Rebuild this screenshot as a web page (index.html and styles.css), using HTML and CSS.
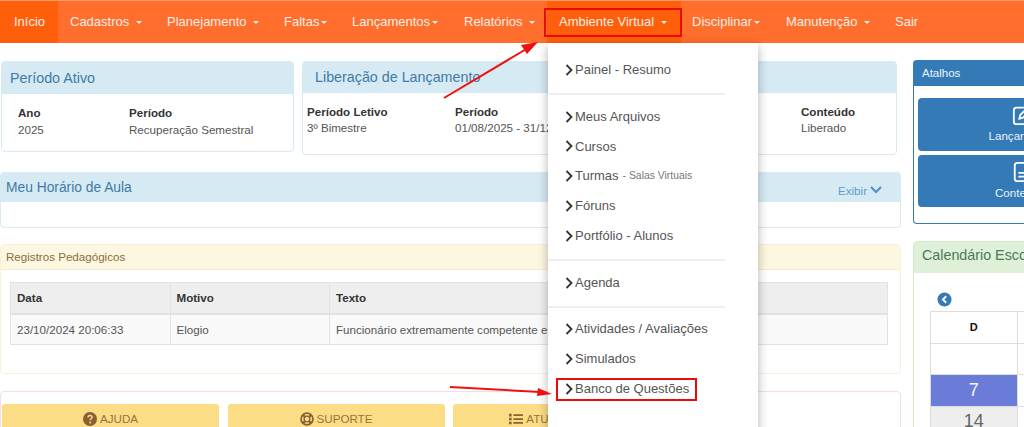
FILE: index.html
```html
<!DOCTYPE html>
<html lang="pt-BR">
<head>
<meta charset="utf-8">
<title>Ambiente Virtual</title>
<link rel="stylesheet" href="styles.css">
</head>
<body>
<nav class="navbar">
  <a class="nav-item active nav-inicio">Início</a>
  <a class="nav-item nav-cad">Cadastros <i class="caret"></i></a>
  <a class="nav-item nav-plan">Planejamento <i class="caret"></i></a>
  <a class="nav-item nav-fal">Faltas<i class="caret tight"></i></a>
  <a class="nav-item nav-lan">Lançamentos<i class="caret tight"></i></a>
  <a class="nav-item nav-rel">Relatórios <i class="caret"></i></a>
  <div class="nav-open">
    <a class="nav-item active nav-amb">Ambiente Virtual <i class="caret"></i></a>
    <span class="mark mark-nav"></span>
    <ul class="dropdown">
      <li class="menu-item first"><svg class="chev" viewBox="0 0 8 12"><path d="M1.5 1l5 5-5 5"/></svg>Painel - Resumo</li>
      <li class="divider"></li>
      <li class="menu-item"><svg class="chev" viewBox="0 0 8 12"><path d="M1.5 1l5 5-5 5"/></svg>Meus Arquivos</li>
      <li class="menu-item"><svg class="chev" viewBox="0 0 8 12"><path d="M1.5 1l5 5-5 5"/></svg>Cursos</li>
      <li class="menu-item"><svg class="chev" viewBox="0 0 8 12"><path d="M1.5 1l5 5-5 5"/></svg>Turmas <small>- Salas Virtuais</small></li>
      <li class="menu-item"><svg class="chev" viewBox="0 0 8 12"><path d="M1.5 1l5 5-5 5"/></svg>Fóruns</li>
      <li class="menu-item"><svg class="chev" viewBox="0 0 8 12"><path d="M1.5 1l5 5-5 5"/></svg>Portfólio - Alunos</li>
      <li class="divider"></li>
      <li class="menu-item"><svg class="chev" viewBox="0 0 8 12"><path d="M1.5 1l5 5-5 5"/></svg>Agenda</li>
      <li class="divider"></li>
      <li class="menu-item"><svg class="chev" viewBox="0 0 8 12"><path d="M1.5 1l5 5-5 5"/></svg>Atividades / Avaliações</li>
      <li class="menu-item"><svg class="chev" viewBox="0 0 8 12"><path d="M1.5 1l5 5-5 5"/></svg>Simulados</li>
      <li class="menu-item marked"><svg class="chev" viewBox="0 0 8 12"><path d="M1.5 1l5 5-5 5"/></svg>Banco de Questões</li>
    </ul>
  </div>
  <a class="nav-item nav-dis">Disciplinar<i class="caret tight"></i></a>
  <a class="nav-item nav-man">Manutenção <i class="caret"></i></a>
  <a class="nav-item nav-sair">Sair</a>
</nav>

<main class="page">
  <div class="col-left">
    <div class="row-top">
      <section class="panel panel-info panel-ativo">
        <h3 class="panel-head">Período Ativo</h3>
        <div class="info-cols ativo-cols">
          <div class="info"><b>Ano</b><span>2025</span></div>
          <div class="info"><b>Período</b><span>Recuperação Semestral</span></div>
        </div>
      </section>
      <section class="panel panel-info panel-lib">
        <h3 class="panel-head">Liberação de Lançamento</h3>
        <div class="info-cols lib-cols">
          <div class="info"><b>Período Letivo</b><span>3º Bimestre</span></div>
          <div class="info"><b>Período</b><span>01/08/2025 - 31/12/2025</span></div>
          <div class="info"><b>Conteúdo</b><span>Liberado</span></div>
        </div>
      </section>
    </div>

    <section class="panel panel-info panel-horario">
      <div class="panel-head horario-head">
        <h3>Meu Horário de Aula</h3>
        <a class="exibir">Exibir <svg class="chev-down" viewBox="0 0 12 8"><path d="M1 1l5 5 5-5"/></svg></a>
      </div>
    </section>

    <section class="panel panel-warn">
      <div class="warn-head">Registros Pedagógicos</div>
      <table class="grid">
        <thead><tr><th class="c1">Data</th><th class="c2">Motivo</th><th>Texto</th></tr></thead>
        <tbody><tr><td>23/10/2024 20:06:33</td><td>Elogio</td><td>Funcionário extremamente competente e</td></tr></tbody>
      </table>
    </section>

    <section class="panel panel-danger">
      <div class="btn-row">
        <a class="btn-y">
          <svg class="ico" viewBox="0 0 16 16"><circle cx="8" cy="8" r="8" fill="#8a6034"/><path d="M5.8 6.2c0-3 4.6-3 4.6-.2 0 1.800-2.200 1.700-2.200 3.500" fill="none" stroke="#fbdd85" stroke-width="1.700"/><circle cx="8.200" cy="12" r="1.100" fill="#fbdd85"/></svg>
          AJUDA</a>
        <a class="btn-y">
          <svg class="ico" viewBox="0 0 16 16"><g fill="none" stroke="#8a6034"><circle cx="8" cy="8" r="6.800" stroke-width="2"/><circle cx="8" cy="8" r="3.300" stroke-width="1.500"/><path d="M3.500 3.500l2.500 2.500M12.500 3.500l-2.500 2.500M3.500 12.500l2.500-2.500M12.500 12.500l-2.500-2.500" stroke-width="2.500"/></g></svg>
          SUPORTE</a>
        <a class="btn-y">
          <svg class="ico" viewBox="0 0 16 16"><path d="M5 3.500h11M5 8h11M5 12.500h11" stroke="#8a6034" stroke-width="2"/><path d="M0 2h3v3H0zM0 6.500h3v3H0zM0 11h3v3H0z" fill="#8a6034"/></svg>
          ATUALIZAÇÕES</a>
      </div>
    </section>
  </div>

  <div class="col-right">
    <section class="panel atalhos">
      <div class="atalhos-head">Atalhos</div>
      <div class="atalhos-body">
        <a class="btn-b">
          <svg class="ico-b" viewBox="0 0 24 24"><path d="M20 13v6a3 3 0 0 1-3 3H5a3 3 0 0 1-3-3V7a3 3 0 0 1 3-3h8" fill="none" stroke="#fff" stroke-width="2"/><path d="M8 16l1-4L19 2l3 3-10 10z" fill="none" stroke="#fff" stroke-width="2"/></svg>
          <span>Lançar Notas</span></a>
        <a class="btn-b">
          <svg class="ico-b" viewBox="0 0 24 24"><path d="M6 2h9l6 6v11a3 3 0 0 1-3 3H6a3 3 0 0 1-3-3V5a3 3 0 0 1 3-3z" fill="none" stroke="#fff" stroke-width="2"/><path d="M7 13h10M7 17h10" stroke="#fff" stroke-width="2"/></svg>
          <span>Conteúdos</span></a>
      </div>
    </section>
    <section class="panel cal">
      <h3 class="cal-head">Calendário Escolar</h3>
      <div class="cal-body">
        <svg class="cal-prev" viewBox="0 0 16 16"><circle cx="8" cy="8" r="7.500" fill="#337ab7"/><path d="M9.800 4.500L6.300 8l3.500 3.500" fill="none" stroke="#fff" stroke-width="2"/></svg>
        <table class="cal-table">
          <tr><th>D</th><th></th></tr>
          <tr><td></td><td></td></tr>
          <tr><td class="today">7</td><td></td></tr>
          <tr><td class="grey">14</td><td></td></tr>
        </table>
      </div>
    </section>
  </div>
</main>

<svg class="arrows" viewBox="0 0 1024 427">
  <path d="M444 98L528 48" stroke="#f01010" stroke-width="2" fill="none"/>
  <path d="M538 42l-17 3 6 9z" fill="#f01010"/>
  <path d="M450 387L540 392" stroke="#f01010" stroke-width="2" fill="none"/>
  <path d="M552 394l-14-6 -1 8z" fill="#f01010"/>
</svg>
</body>
</html>
```

FILE: styles.css
```css
* { box-sizing: border-box; }
html, body { margin: 0; height: 427px; overflow: hidden; background: #fff; }
body { position: relative; font: 11.6px/17px "Liberation Sans", Arial, sans-serif; color: #333; }
h3 { margin: 0; font-weight: normal; font-size: inherit; }
a { display: block; }

.navbar { display: flex; height: 42px; margin-top: 1px; background: #ff6e2c; color: #fff; font-size: 13px; line-height: 42px; box-shadow: 0 -1px 0 #ff9a6a; }
.nav-item { padding: 0 12px; white-space: nowrap; color: #fdeee6; }
.nav-item.active { background: #ff5f0a; height: 42px; }
.nav-inicio { width: 58px; padding-left: 14px; }
.nav-cad { width: 97px; }
.nav-plan { width: 117px; }
.nav-fal { width: 68px; }
.nav-lan { width: 112px; }
.nav-rel { width: 95px; }
.nav-amb { width: 134px; }
.nav-open { position: relative; width: 133px; }
.nav-dis { width: 94px; }
.nav-man { width: 109px; }
.caret { display: inline-block; margin-left: 3px; vertical-align: 2px; border-top: 3px solid currentColor; border-left: 3px solid transparent; border-right: 3px solid transparent; }
.caret.tight { margin-left: 2px; }

.mark { position: absolute; border: 2px solid #ec0b0b; }
.mark-nav { left: -3px; top: 7px; width: 138px; height: 29px; }

.dropdown { position: absolute; z-index: 5; left: 1px; top: 42px; width: 210px; height: 400px; margin: 0; padding: 0; list-style: none; background: #fff; box-shadow: 0 3px 10px rgba(0,0,0,.3); font-size: 13px; line-height: 30px; color: #555; }
.menu-item { display: flex; align-items: center; height: 29.800px; padding-left: 17px; white-space: nowrap; }
.menu-item.first { margin-top: 12px; }
.menu-item small { margin-left: 4px; font-size: 10.400px; color: #777; }
.chev { width: 8px; height: 12px; margin-right: 2px; fill: none; stroke: #333; stroke-width: 1.800; flex: none; }
.divider { width: 177px; height: 2px; margin: 8px 0 7px; background: #eeeeee; }
.marked { position: relative; }
.marked::after { content: ""; box-sizing: border-box; position: absolute; left: 8px; top: 4px; width: 141px; height: 23px; border: 2px solid #ec0b0b; }

.page { display: grid; grid-template-columns: 901px 220px; column-gap: 12px; padding-top: 18px; }
.col-left { min-width: 0; }
.panel { background: #fff; border: 1px solid #d6e9f4; border-radius: 4px; }
.row-top { display: flex; align-items: flex-start; gap: 8px; padding-left: 1px; }
.panel-ativo { width: 293px; height: 91px; }
.panel-lib { width: 595px; height: 94px; }
.panel-head { display: flex; align-items: center; height: 32px; background: #d6eaf4; color: #3f7ba6; font-size: 14.300px; padding-left: 8px; }
.panel-lib .panel-head { height: 31px; padding-left: 12px; }
.info-cols { display: grid; }
.ativo-cols { grid-template-columns: 111px 1fr; padding: 11px 16px; line-height: 16.500px; }
.lib-cols { grid-template-columns: 148px 346px 1fr; padding: 11px 4px; line-height: 16px; }
.info b, .info span { display: block; white-space: nowrap; }
.info span { color: #555; }

.panel-horario { height: 56px; margin-top: 17px; }
.horario-head { justify-content: space-between; height: 29px; padding: 0 18px 0 5px; font-size: 13.800px; }
.exibir { display: flex; align-items: center; gap: 3px; padding-top: 5px; font-size: 11.600px; color: #5b9ccf; }
.chev-down { width: 12px; height: 8px; fill: none; stroke: #4d8fc6; stroke-width: 2; }

.panel-warn { height: 130px; margin-top: 16px; border-color: #fbefd9; }
.warn-head { height: 25px; padding-left: 5px; background: #fdf7e1; border-bottom: 1px solid #f6eccd; color: #8a6d3b; line-height: 24px; }
.grid { width: 878px; margin: 12px 0 0 9px; border-collapse: collapse; table-layout: fixed; background: #f9f9f9; }
.grid th, .grid td { height: 31px; padding: 0 6px; border: 1px solid #e2e2e2; text-align: left; white-space: nowrap; }
.grid th { background: #eeeeee; color: #333; border-bottom-width: 2px; }
.grid td { color: #555; }
.c1 { width: 159.500px; }
.c2 { width: 159.500px; }

.panel-danger { height: 60px; margin-top: 17px; border-color: #f6dde0; padding: 12px 0 0 1px; }
.btn-row { display: flex; gap: 8.500px; }
.btn-y { display: flex; align-items: center; justify-content: center; gap: 3px; width: 217px; height: 30px; background: #fbdd85; border-radius: 3px 3px 0 0; color: #96763f; line-height: 28px; }
.ico { width: 14px; height: 14px; }

.col-right { min-width: 0; }
.atalhos { height: 164px; margin-top: -1px; border-color: #337ab7; border-right: 0; }
.atalhos-head { height: 25px; padding-left: 8px; background: #337ab7; color: #eef5fb; font-size: 11.500px; line-height: 25px; }
.atalhos-body { display: flex; flex-direction: column; gap: 4px; padding: 12px 0 0 4px; }
.btn-b { display: flex; flex-direction: column; align-items: center; justify-content: center; width: 210px; background: #337ab7; border-radius: 4px; color: #eaf2f9; height: 52.500px; }
.btn-b span { line-height: 16px; }
.ico-b { width: 22px; height: 22px; margin-bottom: 2px; }

.cal { height: 220px; margin-top: 17px; border-color: #d6e9c6; }
.cal-head { height: 31px; padding-left: 8px; background: #dff0d8; color: #4a7a5a; font-size: 14.300px; line-height: 27px; white-space: nowrap; }
.cal-prev { display: block; width: 15px; height: 15px; margin: 19px 0 4px 23px; }
.cal-table { width: 174px; margin-left: 16px; border-collapse: collapse; table-layout: fixed; }
.cal-table th, .cal-table td { height: 31.500px; border: 1px solid #ddd; text-align: center; font-size: 11px; color: #111; }
.cal-table td { font-size: 18px; }
.cal-table .today { height: 29.500px; background: #6b7cd8; color: #f4f4ff; }
.cal-table .grey { height: 29.500px; background: #eeeeee; color: #666; }

.arrows { position: absolute; z-index: 6; left: 0; top: 0; width: 1024px; height: 427px; pointer-events: none; }
```
